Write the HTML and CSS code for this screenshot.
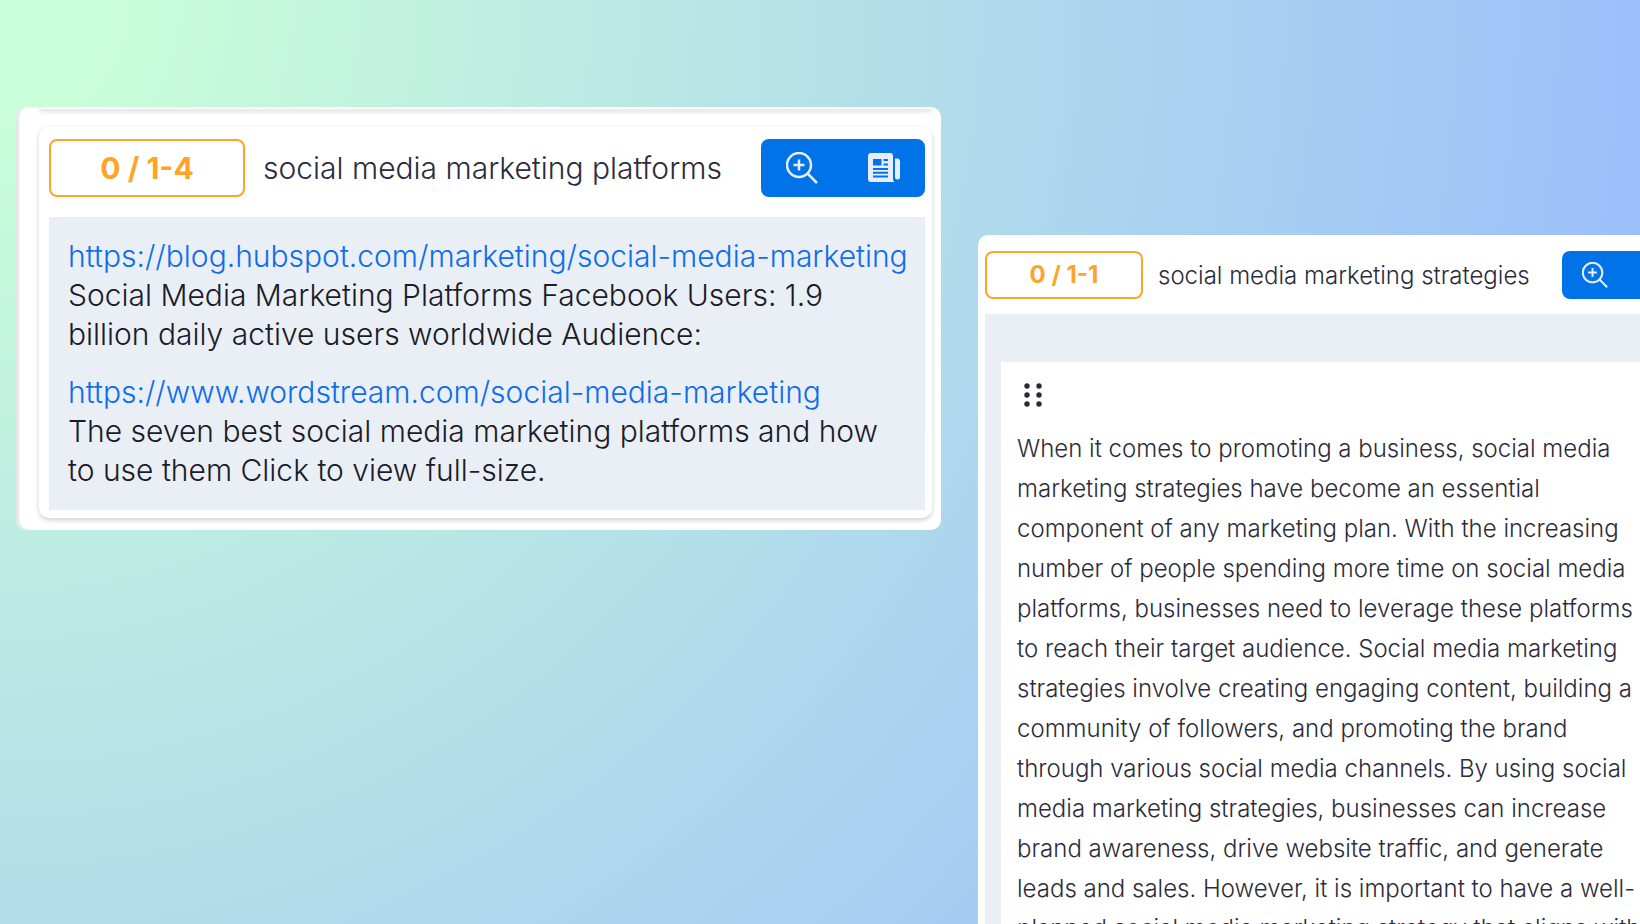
FILE: index.html
```html
<!DOCTYPE html>
<html lang="en">
<head>
<meta charset="utf-8">
<meta name="viewport" content="width=device-width, initial-scale=1">
<title>Social media marketing</title>
<link rel="stylesheet" href="styles.css">
</head>
<body>
<svg class="sprite" aria-hidden="true">
  <symbol id="zoom-in" viewBox="0 0 32 32">
    <circle cx="13" cy="13" r="12" fill="none" stroke="currentColor" stroke-width="2.500"/>
    <path d="M13 7.500v11M7.500 13h11M21.500 21.500L31 31" fill="none" stroke="currentColor" stroke-width="2.500"/>
  </symbol>
  <symbol id="news" viewBox="0 0 32 32">
    <path fill="currentColor" fill-rule="evenodd" d="M3 1h19a3 3 0 0 1 3 3v22.500a4 4 0 0 0 1.500 3.500H3a3 3 0 0 1-3-3V4a3 3 0 0 1 3-3zM5 7v6.500h8.500V7zM15.500 7v2H20V7zM15.500 11.500v2H20v-2zM5 16v2h15v-2zM5 19.800v2h15v-2zM5 23.600v2h15v-2z"/>
    <path fill="currentColor" d="M27 6.500h2a3 3 0 0 1 3 3V25a2.500 2.500 0 0 1-5 0z"/>
  </symbol>
</svg>
<main class="board">
  <section class="panel panel-sources">
    <div class="previous-card"></div>
    <article class="card">
      <header class="card-head">
        <span class="count">0 / 1-4</span>
        <h2 class="title">social media marketing platforms</h2>
        <div class="actions">
          <button type="button" class="action" aria-label="Zoom in"><svg class="icon"><use href="#zoom-in"/></svg></button>
          <button type="button" class="action" aria-label="Articles"><svg class="icon"><use href="#news"/></svg></button>
        </div>
      </header>
      <div class="sources">
        <div class="source">
          <a href="#">https://blog.hubspot.com/marketing/social-media-marketing</a>
          <p>Social Media Marketing Platforms Facebook Users: 1.9 billion daily active users worldwide Audience:</p>
        </div>
        <div class="source">
          <a href="#">https://www.wordstream.com/social-media-marketing</a>
          <p>The seven best social media marketing platforms and how to use them Click to view full-size.</p>
        </div>
      </div>
    </article>
  </section>
  <section class="panel panel-draft">
    <header class="card-head">
      <span class="count">0 / 1-1</span>
      <h2 class="title">social media marketing strategies</h2>
      <div class="actions">
        <button type="button" class="action" aria-label="Zoom in"><svg class="icon"><use href="#zoom-in"/></svg></button>
        <button type="button" class="action" aria-label="Articles"><svg class="icon"><use href="#news"/></svg></button>
      </div>
    </header>
    <div class="draft">
      <div class="paragraph">
        <button type="button" class="grip" aria-label="Move paragraph">
          <svg class="grip-icon" viewBox="0 0 18 24" fill="currentColor"><circle cx="3" cy="3" r="2.700"/><circle cx="15" cy="3" r="2.700"/><circle cx="3" cy="12" r="2.700"/><circle cx="15" cy="12" r="2.700"/><circle cx="3" cy="21" r="2.700"/><circle cx="15" cy="21" r="2.700"/></svg>
        </button>
        <p>When it comes to promoting a business, social media marketing strategies have become an essential component of any marketing plan. With the increasing number of people spending more time on social media platforms, businesses need to leverage these platforms to reach their target audience. Social media marketing strategies involve creating engaging content, building a community of followers, and promoting the brand through various social media channels. By using social media marketing strategies, businesses can increase brand awareness, drive website traffic, and generate leads and sales. However, it is important to have a well-planned social media marketing strategy that aligns with</p>
      </div>
    </div>
  </section>
</main>
</body>
</html>
```
FILE: styles.css
```css
* { box-sizing: border-box; }

body {
  margin: 0;
  overflow: hidden;
  font-family: Inter, "Liberation Sans", sans-serif;
  font-weight: 300;
  color: #1c1c28;
}

p, h2 { margin: 0; font-weight: inherit; }

.sprite { position: absolute; width: 0; height: 0; }

.board {
  display: grid;
  grid-template-columns: 925fr 716fr;
  align-items: start;
  gap: 37px;
  width: calc(100vw + 54px);
  height: 100vh;
  padding: 107px 0 0 16px;
  overflow: hidden;
  background: radial-gradient(circle at 0 0, #c9ffd8 0, #c9ffd8 90px, #b1dceb 950px, #9bbffa 1660px);
}

.panel { background: #fff; border-radius: 10px; }

.panel-sources {
  padding: 0 9px 12px 23px;
  overflow: hidden;
  box-shadow: inset 3px 0 2px #e4e6e8;
}

.previous-card {
  height: 2px;
  margin-bottom: 18px;
  border-radius: 0 0 10px 10px;
  box-shadow: 0 2px 4px #c4c4c8;
}

.card {
  padding: 12px 7px 8px 10px;
  border-radius: 10px;
  box-shadow: 0 2px 5px #cfcfd3;
}

.card-head { display: flex; align-items: center; }

.count {
  text-align: center;
  font-weight: 700;
  color: #ffa426;
  border: 2px solid #ffa426;
  border-radius: 8px;
}

.title { white-space: nowrap; color: #2c2c3a; }

.actions {
  display: flex;
  margin-left: auto;
  overflow: hidden;
  border-radius: 8px;
}

.action {
  display: grid;
  place-items: center;
  padding: 0;
  border: 0;
  color: #e6eefa;
  background: #0073e9;
}

.panel-sources .count { width: 196px; font-size: 30px; line-height: 54px; }
.panel-sources .title { margin-left: 18px; font-size: 30px; }
.panel-sources .action { width: 82px; height: 58px; }
.panel-sources .icon { width: 32px; height: 32px; }

.sources {
  display: grid;
  gap: 19px;
  margin-top: 20px;
  padding: 20px 19px;
  font-size: 30px;
  line-height: 39px;
  background: #eaeff6;
}

.source a { display: block; color: #0f6dea; text-decoration: none; white-space: nowrap; }

.panel-draft { margin-top: 128px; padding: 16px 0 0 7px; border-radius: 10px 0 0 0; }
.panel-draft .count { width: 158px; font-size: 24px; line-height: 44px; }
.panel-draft .title { margin-left: 15px; font-size: 24px; }
.panel-draft .action { width: 66px; height: 48px; }
.panel-draft .icon { width: 26px; height: 26px; }

.draft { margin-top: 15px; padding: 48px 16px; background: #eaeff6; }

.paragraph {
  padding: 20px 28px 20px 16px;
  font-size: 24px;
  line-height: 40px;
  color: #2c2c3a;
  background: #fff;
}

.grip {
  display: block;
  margin-bottom: 21px;
  padding: 1px 7px;
  border: 0;
  color: #292938;
  background: none;
}

.grip-icon { display: block; width: 18px; height: 24px; }
```
